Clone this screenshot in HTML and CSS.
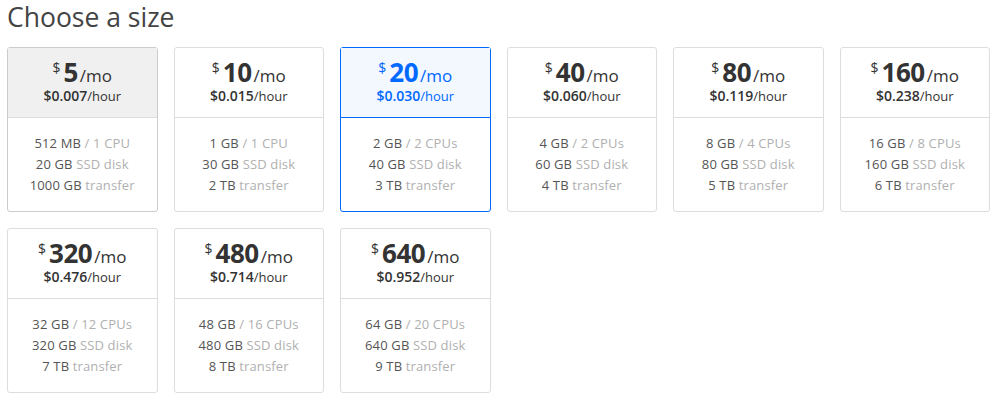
FILE: index.html
```html
<!DOCTYPE html>
<html lang="en">
<head>
    <meta charset="UTF-8">
    <title>Choose a size</title>
    <link rel="stylesheet" href="styles.css">
</head>
<body>
    <div class="sizes">
        <h2>Choose a size</h2>
        <div class="size-grid">
            <div class="size hover">
                <div class="size-price">
                    <div class="monthly"><span class="cur">$</span><span class="amount">5</span><span class="per">/mo</span></div>
                    <div class="hourly"><b>$0.007</b>/hour</div>
                </div>
                <ul class="size-specs">
                    <li>512 MB <span>/ 1 CPU</span></li>
                    <li>20 GB <span>SSD disk</span></li>
                    <li>1000 GB <span>transfer</span></li>
                </ul>
            </div>
            <div class="size">
                <div class="size-price">
                    <div class="monthly"><span class="cur">$</span><span class="amount">10</span><span class="per">/mo</span></div>
                    <div class="hourly"><b>$0.015</b>/hour</div>
                </div>
                <ul class="size-specs">
                    <li>1 GB <span>/ 1 CPU</span></li>
                    <li>30 GB <span>SSD disk</span></li>
                    <li>2 TB <span>transfer</span></li>
                </ul>
            </div>
            <div class="size selected">
                <div class="size-price">
                    <div class="monthly"><span class="cur">$</span><span class="amount">20</span><span class="per">/mo</span></div>
                    <div class="hourly"><b>$0.030</b>/hour</div>
                </div>
                <ul class="size-specs">
                    <li>2 GB <span>/ 2 CPUs</span></li>
                    <li>40 GB <span>SSD disk</span></li>
                    <li>3 TB <span>transfer</span></li>
                </ul>
            </div>
            <div class="size">
                <div class="size-price">
                    <div class="monthly"><span class="cur">$</span><span class="amount">40</span><span class="per">/mo</span></div>
                    <div class="hourly"><b>$0.060</b>/hour</div>
                </div>
                <ul class="size-specs">
                    <li>4 GB <span>/ 2 CPUs</span></li>
                    <li>60 GB <span>SSD disk</span></li>
                    <li>4 TB <span>transfer</span></li>
                </ul>
            </div>
            <div class="size">
                <div class="size-price">
                    <div class="monthly"><span class="cur">$</span><span class="amount">80</span><span class="per">/mo</span></div>
                    <div class="hourly"><b>$0.119</b>/hour</div>
                </div>
                <ul class="size-specs">
                    <li>8 GB <span>/ 4 CPUs</span></li>
                    <li>80 GB <span>SSD disk</span></li>
                    <li>5 TB <span>transfer</span></li>
                </ul>
            </div>
            <div class="size">
                <div class="size-price">
                    <div class="monthly"><span class="cur">$</span><span class="amount">160</span><span class="per">/mo</span></div>
                    <div class="hourly"><b>$0.238</b>/hour</div>
                </div>
                <ul class="size-specs">
                    <li>16 GB <span>/ 8 CPUs</span></li>
                    <li>160 GB <span>SSD disk</span></li>
                    <li>6 TB <span>transfer</span></li>
                </ul>
            </div>
            <div class="size">
                <div class="size-price">
                    <div class="monthly"><span class="cur">$</span><span class="amount">320</span><span class="per">/mo</span></div>
                    <div class="hourly"><b>$0.476</b>/hour</div>
                </div>
                <ul class="size-specs">
                    <li>32 GB <span>/ 12 CPUs</span></li>
                    <li>320 GB <span>SSD disk</span></li>
                    <li>7 TB <span>transfer</span></li>
                </ul>
            </div>
            <div class="size">
                <div class="size-price">
                    <div class="monthly"><span class="cur">$</span><span class="amount">480</span><span class="per">/mo</span></div>
                    <div class="hourly"><b>$0.714</b>/hour</div>
                </div>
                <ul class="size-specs">
                    <li>48 GB <span>/ 16 CPUs</span></li>
                    <li>480 GB <span>SSD disk</span></li>
                    <li>8 TB <span>transfer</span></li>
                </ul>
            </div>
            <div class="size">
                <div class="size-price">
                    <div class="monthly"><span class="cur">$</span><span class="amount">640</span><span class="per">/mo</span></div>
                    <div class="hourly"><b>$0.952</b>/hour</div>
                </div>
                <ul class="size-specs">
                    <li>64 GB <span>/ 20 CPUs</span></li>
                    <li>640 GB <span>SSD disk</span></li>
                    <li>9 TB <span>transfer</span></li>
                </ul>
            </div>
        </div>
    </div>
</body>
</html>
```

FILE: styles.css
```css
body {
    margin: 0;
    font-family: 'Open Sans', 'Liberation Sans', sans-serif;
    color: #444;
    background: #fff;
}
.sizes {
    padding: 0 7px;
    width: 983px;
}
h2 {
    margin: 0;
    padding: 1px 0 14px;
    font-size: 26.5px;
    font-weight: 400;
    line-height: 32px;
    color: #444;
}
.size-grid {
    display: grid;
    grid-template-columns: repeat(6, 1fr);
    gap: 16px;
}
.size {
    border: 1px solid #ddd;
    border-radius: 3px;
    text-align: center;
    background: #fff;
}
.size-price {
    height: 70px;
    box-sizing: border-box;
    padding-top: 10px;
    border-bottom: 1px solid #ddd;
    color: #333;
}
.monthly {
    font-size: 26px;
    line-height: 29px;
    height: 29px;
}
.cur {
    font-size: 14px;
    line-height: 1;
    vertical-align: 9px;
    margin-right: 3px;
}
.amount {
    font-weight: 700;
    letter-spacing: -0.5px;
}
.per {
    font-size: 17px;
    margin-left: 2px;
}
.hourly {
    font-size: 13px;
    line-height: 18px;
    height: 18px;
}
.hourly b {
    font-size: 14px;
    font-weight: 600;
}
.size-specs {
    list-style: none;
    margin: 0;
    padding: 15px 0;
    font-size: 13px;
    line-height: 21px;
    letter-spacing: 0.15px;
    color: #555;
}
.size-specs span {
    color: #b0b0b0;
}
.size.hover {
    border-color: #ccc;
}
.size.hover .size-price {
    background: #f0f0f0;
}
.size.selected {
    border-color: #0069ff;
}
.size.selected .size-price {
    background: #f3f8ff;
    border-bottom-color: #0069ff;
    color: #0069ff;
}
```
